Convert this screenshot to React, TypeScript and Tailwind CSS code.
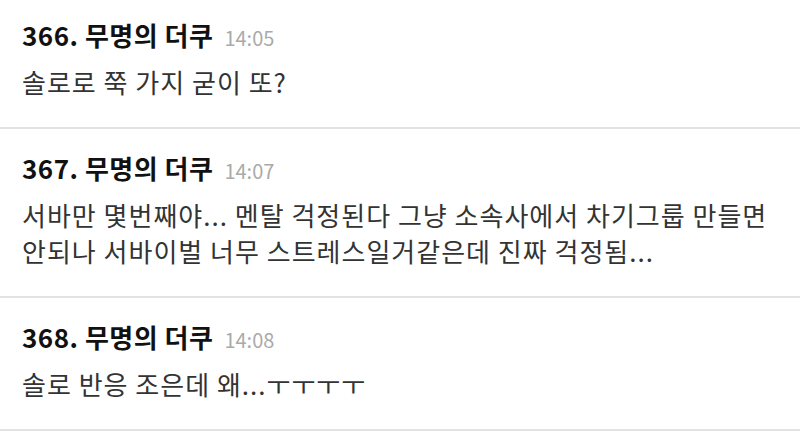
const comments = [
  {
    no: 366,
    time: "14:05",
    body: "솔로로 쭉 가지 굳이 또?",
  },
  {
    no: 367,
    time: "14:07",
    body: "서바만 몇번째야... 멘탈 걱정된다 그냥 소속사에서 차기그룹 만들면 안되나 서바이벌 너무 스트레스일거같은데 진짜 걱정됨...",
  },
  {
    no: 368,
    time: "14:08",
    body: "솔로 반응 조은데 왜...ㅜㅜㅜㅜ",
  },
];

const Comment = ({ no, time, body }: { no: number; time: string; body: string }) => {
  return (
    <div className="border-b-2 border-[#e2e2e2] px-[22px] pt-[23px] pb-[27px] first:pt-[19px]">
      <div className="flex items-baseline gap-[11px]">
        <span className="text-[26px] font-bold leading-[32px] tracking-[0.5px] text-[#111]">
          {no}. 무명의 더쿠
        </span>
        <span className="text-[20px] text-[#aaa]">{time}</span>
      </div>
      <p className="mt-[11px] text-[26px] leading-[36px] tracking-[1px] text-[#333]">{body}</p>
    </div>
  );
};

export default function App() {
  return (
    <div
      className="w-[800px] h-[435px] overflow-hidden bg-white"
      style={{ fontFamily: '"Noto Sans CJK KR", "Noto Sans", sans-serif' }}
    >
      {comments.map((c) => (
        <Comment key={c.no} {...c} />
      ))}
    </div>
  );
}
